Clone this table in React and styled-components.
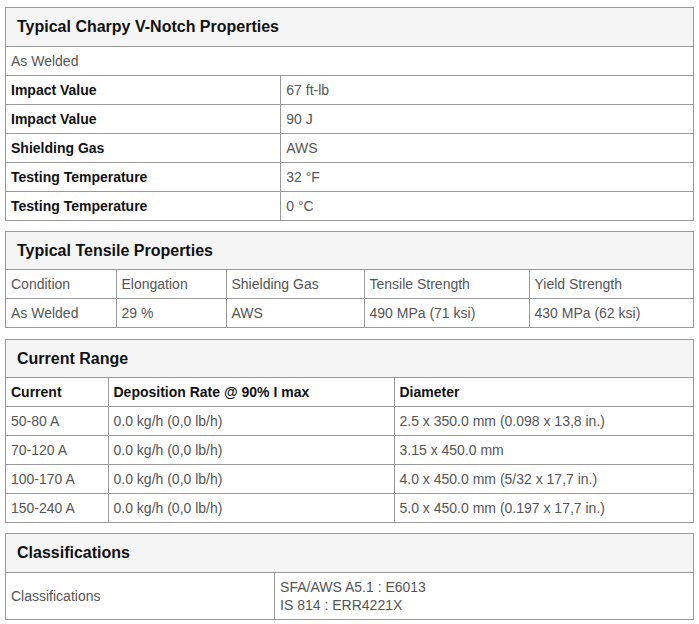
import styled, { createGlobalStyle } from "styled-components"

const GlobalStyle = createGlobalStyle`
  body {
    margin: 0;
    background: #fff;
    font-family: "Liberation Sans", Arial, sans-serif;
  }
`

const Page = styled.div`
  padding: 7px 5px;
`

const Panel = styled.section`
  border: 1px solid #999;
  margin-bottom: 10.33px;
`

const Title = styled.h3`
  margin: 0;
  padding: 10px 11px;
  font-size: 16px;
  line-height: 17.5px;
  font-weight: bold;
  color: #111;
  background-color: #f5f5f5;
  border-bottom: 1px solid #999;
`

const Table = styled.table`
  width: 100%;
  border-collapse: collapse;
  table-layout: fixed;
`

const Cell = styled.td`
  padding: 5px 5px;
  font-size: 14px;
  line-height: 18px;
  color: ${p => (p.$bold ? "#111" : "#555")};
  font-weight: ${p => (p.$bold ? "bold" : "normal")};
  text-align: left;
  vertical-align: middle;
  border-left: 1px solid #999;

  &:first-child {
    border-left: none;
  }

  tr + tr > & {
    border-top: 1px solid #999;
  }
`

const charpy = [
  ["Impact Value", "67 ft-lb"],
  ["Impact Value", "90 J"],
  ["Shielding Gas", "AWS"],
  ["Testing Temperature", "32 °F"],
  ["Testing Temperature", "0 °C"],
]

const tensileCols = [110, 110, 138, 165]
const tensileHead = ["Condition", "Elongation", "Shielding Gas", "Tensile Strength", "Yield Strength"]
const tensileRow = ["As Welded", "29 %", "AWS", "490 MPa (71 ksi)", "430 MPa (62 ksi)"]

const currentCols = [102, 286]
const currentRows = [
  ["50-80 A", "0.0 kg/h (0,0 lb/h)", "2.5 x 350.0 mm (0.098 x 13,8 in.)"],
  ["70-120 A", "0.0 kg/h (0,0 lb/h)", "3.15 x 450.0 mm"],
  ["100-170 A", "0.0 kg/h (0,0 lb/h)", "4.0 x 450.0 mm (5/32 x 17,7 in.)"],
  ["150-240 A", "0.0 kg/h (0,0 lb/h)", "5.0 x 450.0 mm (0.197 x 17,7 in.)"],
]

export default function App() {
  return (
    <Page>
      <GlobalStyle />

      <Panel>
        <Title>Typical Charpy V-Notch Properties</Title>
        <Table>
          <colgroup>
            <col style={{ width: "40%" }} />
            <col />
          </colgroup>
          <tbody>
            <tr>
              <Cell colSpan={2}>As Welded</Cell>
            </tr>
            {charpy.map(([label, value], i) => (
              <tr key={i}>
                <Cell $bold>{label}</Cell>
                <Cell>{value}</Cell>
              </tr>
            ))}
          </tbody>
        </Table>
      </Panel>

      <Panel>
        <Title>Typical Tensile Properties</Title>
        <Table>
          <colgroup>
            {tensileCols.map((w, i) => (
              <col key={i} style={{ width: w }} />
            ))}
            <col />
          </colgroup>
          <tbody>
            <tr>
              {tensileHead.map(h => (
                <Cell key={h}>{h}</Cell>
              ))}
            </tr>
            <tr>
              {tensileRow.map((v, i) => (
                <Cell key={i}>{v}</Cell>
              ))}
            </tr>
          </tbody>
        </Table>
      </Panel>

      <Panel>
        <Title>Current Range</Title>
        <Table>
          <colgroup>
            {currentCols.map((w, i) => (
              <col key={i} style={{ width: w }} />
            ))}
            <col />
          </colgroup>
          <tbody>
            <tr>
              <Cell $bold>Current</Cell>
              <Cell $bold>Deposition Rate @ 90% I max</Cell>
              <Cell $bold>Diameter</Cell>
            </tr>
            {currentRows.map((row, i) => (
              <tr key={i}>
                {row.map((v, j) => (
                  <Cell key={j}>{v}</Cell>
                ))}
              </tr>
            ))}
          </tbody>
        </Table>
      </Panel>

      <Panel>
        <Title>Classifications</Title>
        <Table>
          <colgroup>
            <col style={{ width: "39.1%" }} />
            <col />
          </colgroup>
          <tbody>
            <tr>
              <Cell>Classifications</Cell>
              <Cell>
                SFA/AWS A5.1 : E6013
                <br />
                IS 814 : ERR4221X
              </Cell>
            </tr>
          </tbody>
        </Table>
      </Panel>
    </Page>
  )
}
